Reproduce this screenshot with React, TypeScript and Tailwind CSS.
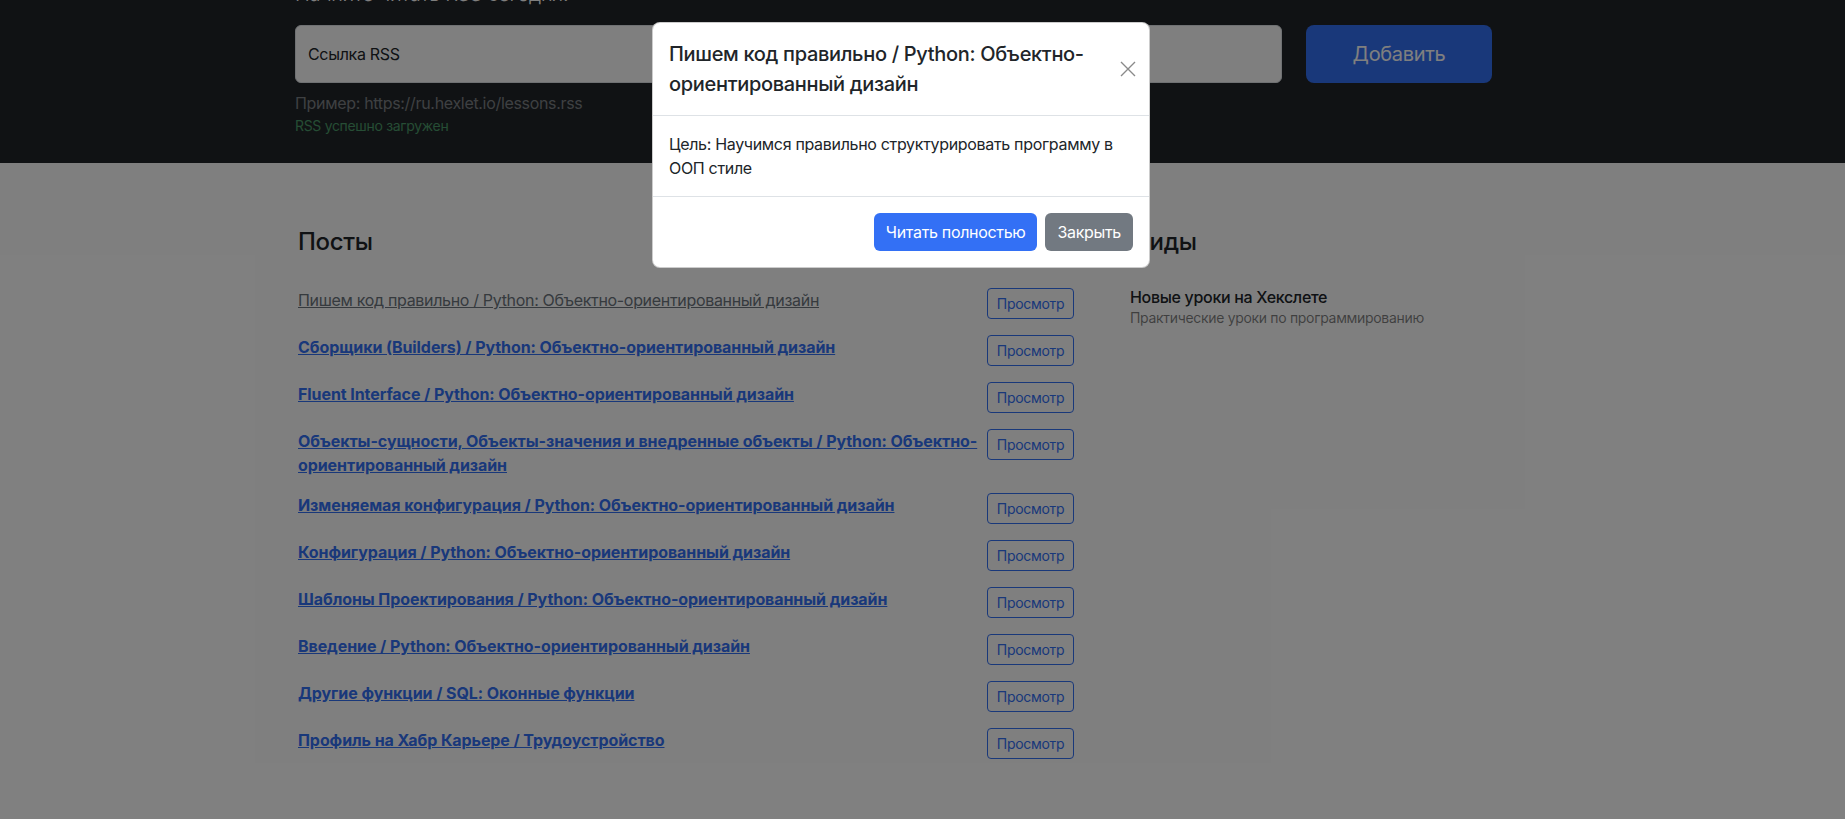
import React from "react";

// Posts as the aggregator lists them; the first one has already been read.
const POSTS: { title: string; read?: boolean }[] = [
  { title: "Пишем код правильно / Python: Объектно-ориентированный дизайн", read: true },
  { title: "Сборщики (Builders) / Python: Объектно-ориентированный дизайн" },
  { title: "Fluent Interface / Python: Объектно-ориентированный дизайн" },
  { title: "Объекты-сущности, Объекты-значения и внедренные объекты / Python: Объектно-ориентированный дизайн" },
  { title: "Изменяемая конфигурация / Python: Объектно-ориентированный дизайн" },
  { title: "Конфигурация / Python: Объектно-ориентированный дизайн" },
  { title: "Шаблоны Проектирования / Python: Объектно-ориентированный дизайн" },
  { title: "Введение / Python: Объектно-ориентированный дизайн" },
  { title: "Другие функции / SQL: Оконные функции" },
  { title: "Профиль на Хабр Карьере / Трудоустройство" },
];

const FONT = "font-['Inter','Noto_Sans',sans-serif] tracking-[-0.02em]";

export default function App() {
  return (
    <div className={`relative h-[819px] overflow-hidden bg-white text-[#212529] ${FONT}`}>
      <Header />
      <Main />

      {/* backdrop */}
      <div className="absolute inset-0 bg-black/50" />

      <Modal />
    </div>
  );
}

function Header() {
  return (
    <div className="h-[163px] overflow-hidden bg-[#212529]">
      <div className="ml-[295px] w-[1197px]">
        <p className="-mt-[21px] mb-4 text-[20px] leading-[30px] font-light text-white">
          Начните читать RSS сегодня!
        </p>
        <form className="flex gap-6" onSubmit={(e) => e.preventDefault()}>
          <div className="flex h-[58px] flex-1 items-center rounded-[6px] border border-[#dee2e6] bg-white px-3 text-[16px]">
            Ссылка RSS
          </div>
          <button className="h-[58px] w-[186px] rounded-[8px] bg-[#3370f5] text-[20px] text-white">
            Добавить
          </button>
        </form>
        <p className="mt-2 text-[16px] leading-6 text-[#7d8185]">
          Пример: https://ru.hexlet.io/lessons.rss
        </p>
        <p className="text-[14px] leading-[21px] text-[#4c9b6a]">RSS успешно загружен</p>
      </div>
    </div>
  );
}

function Main() {
  return (
    <div className="flex pt-12 pl-[282px]">
      <div className="w-[808px]">
        <h2 className="px-4 pt-4 pb-6 text-[24px] leading-[29px] font-medium">Посты</h2>
        <ul>
          {POSTS.map((p) => (
            <li key={p.title} className="flex items-start justify-between px-4 py-2">
              <a
                href="#"
                className={`text-[16px] leading-6 underline ${
                  p.read
                    ? "font-normal text-[#6c757d]"
                    : "font-bold tracking-[-0.005em] text-[#3370f5]"
                }`}
              >
                {p.title}
              </a>
              <button className="h-[31px] w-[87px] shrink-0 rounded-[4px] border border-[#3370f5] text-[14px] text-[#3370f5]">
                Просмотр
              </button>
            </li>
          ))}
        </ul>
      </div>
      <div className="ml-6 w-[400px]">
        <h2 className="px-4 pt-4 pb-6 text-[24px] leading-[29px] font-medium">Фиды</h2>
        <div className="px-4 py-2">
          <h3 className="text-[16px] leading-[19px] font-medium">Новые уроки на Хекслете</h3>
          <p className="text-[14px] leading-[21px] text-black/50">Практические уроки по программированию</p>
        </div>
      </div>
    </div>
  );
}

function Modal() {
  return (
    <div className="absolute top-[22px] left-[652px] w-[498px] rounded-[8px] border border-black/20 bg-white">
      <div className="flex items-start border-b border-[#dee2e6] p-4">
        <h5 className="flex-1 text-[20px] leading-[30px] font-medium">
          Пишем код правильно / Python: Объектно-ориентированный дизайн
        </h5>
        <button className="mt-[22px] -mr-[3px] ml-2 flex h-4 w-4 items-center justify-center" aria-label="Close">
          <svg viewBox="0 0 16 16" className="h-4 w-4" fill="none" stroke="#8a8a8a" strokeWidth="1.4">
            <path d="M1 1l14 14M15 1L1 15" />
          </svg>
        </button>
      </div>
      <div className="p-4 text-[16px] leading-6">
        Цель: Научимся правильно структурировать программу в ООП стиле
      </div>
      <div className="flex justify-end gap-2 border-t border-[#dee2e6] px-4 py-4">
        <a href="#" className="flex h-[38px] items-center rounded-[6px] bg-[#3370f5] px-3 text-[16px] text-white">
          Читать полностью
        </a>
        <button className="h-[38px] rounded-[6px] bg-[#727981] px-3 text-[16px] text-white">Закрыть</button>
      </div>
    </div>
  );
}
